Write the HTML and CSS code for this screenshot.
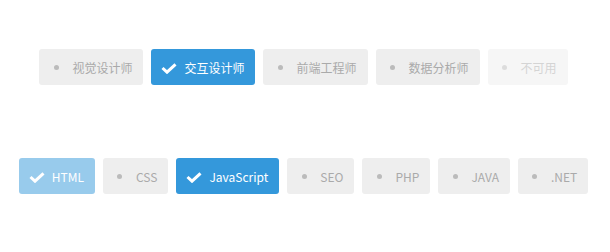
FILE: index.html
```html
<!DOCTYPE html>
<html lang="zh-CN">
<head>
  <meta charset="UTF-8" />
  <meta name="viewport" content="width=device-width, initial-scale=1.0"/>
  <title>Checkbox Tags</title>
  <link rel="stylesheet" href="styles.css">
</head>
<body>
  <div class="tag-group first">
    <label class="tag"><span class="mark"></span>视觉设计师</label>
    <label class="tag checked">
      <svg class="check" width="16" height="11" viewBox="0 0 16 11"><polyline points="1.5,5 6,9.2 14.5,1.3" /></svg>交互设计师
    </label>
    <label class="tag"><span class="mark"></span>前端工程师</label>
    <label class="tag"><span class="mark"></span>数据分析师</label>
    <label class="tag disabled"><span class="mark"></span>不可用</label>
  </div>

  <div class="tag-group second">
    <label class="tag checked disabled">
      <svg class="check" width="16" height="11" viewBox="0 0 16 11"><polyline points="1.5,5 6,9.2 14.5,1.3" /></svg>HTML
    </label>
    <label class="tag"><span class="mark"></span>CSS</label>
    <label class="tag checked">
      <svg class="check" width="16" height="11" viewBox="0 0 16 11"><polyline points="1.5,5 6,9.2 14.5,1.3" /></svg>JavaScript
    </label>
    <label class="tag"><span class="mark"></span>SEO</label>
    <label class="tag"><span class="mark"></span>PHP</label>
    <label class="tag"><span class="mark"></span>JAVA</label>
    <label class="tag"><span class="mark"></span>.NET</label>
  </div>
</body>
</html>
```

FILE: styles.css
```css
body {
  margin: 0;
  font-family: "Microsoft YaHei", "Noto Sans CJK SC", sans-serif;
  font-size: 12px;
  background-color: #fff;
}

.tag-group {
  display: flex;
  justify-content: center;
  gap: 8px;
  padding-right: 3px;
}

.tag-group.first {
  margin-top: 49px;
}

.tag-group.second {
  margin-top: 73px;
}

.tag {
  display: flex;
  align-items: center;
  height: 36px;
  padding: 0 11px 0 10px;
  background-color: #eee;
  color: #aaa;
  border-radius: 3px;
  cursor: pointer;
}

.mark {
  width: 16px;
  height: 16px;
  margin-right: 7px;
  display: flex;
  align-items: center;
  justify-content: center;
}

.mark::before {
  content: "";
  width: 5px;
  height: 5px;
  margin-left: -2px;
  border-radius: 50%;
  background-color: #bbb;
}

.check {
  margin-right: 7px;
  margin-top: 2px;
}

.check polyline {
  fill: none;
  stroke: #fff;
  stroke-width: 3;
}

.tag.checked {
  background-color: #3498db;
  color: #fff;
}

.tag.disabled {
  opacity: 0.5;
  cursor: not-allowed;
}
```
